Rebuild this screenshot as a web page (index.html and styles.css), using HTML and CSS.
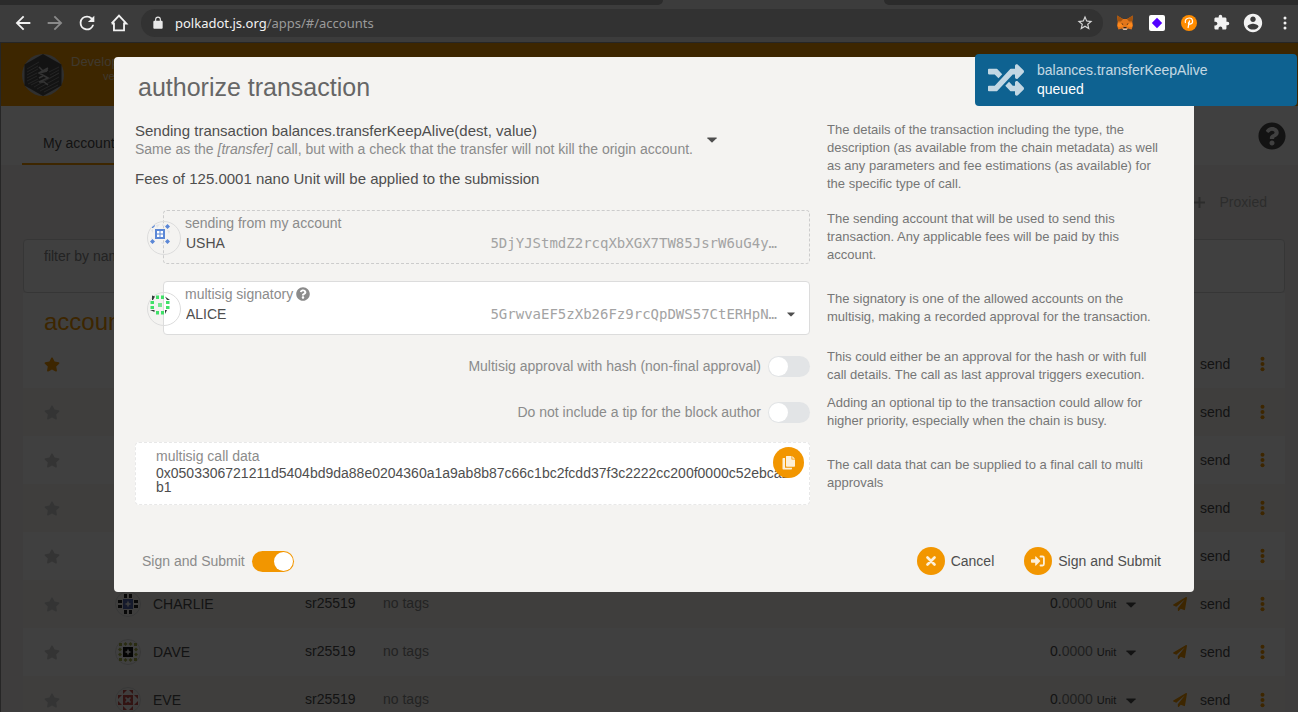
FILE: index.html
```
<!DOCTYPE html>
<html lang="en">
<head>
<meta charset="utf-8">
<title>Accounts</title>
<link rel="stylesheet" href="styles.css">
</head>
<body>
<svg class="sprite" aria-hidden="true">
  <symbol id="i-star" viewBox="0 0 576 512"><path d="M259.3 17.8L194 150.2 47.9 171.5c-26.2 3.8-36.7 36.1-17.7 54.6l105.7 103-25 145.5c-4.5 26.3 23.2 46 46.4 33.7L288 439.6l130.7 68.7c23.2 12.2 50.9-7.4 46.4-33.7l-25-145.5 105.7-103c19-18.5 8.5-50.8-17.7-54.6L382 150.2 316.7 17.8c-11.7-23.6-45.6-23.9-57.4 0z"/></symbol>
  <symbol id="i-help" viewBox="0 0 512 512"><path d="M504 256c0 136.997-111.043 248-248 248S8 392.997 8 256C8 119.083 119.043 8 256 8s248 111.083 248 248zM262.655 90c-54.497 0-89.255 22.957-116.549 63.758-3.536 5.286-2.353 12.415 2.715 16.258l34.699 26.31c5.205 3.947 12.621 3.008 16.665-2.122 17.864-22.658 30.113-35.797 57.303-35.797 20.429 0 45.698 13.148 45.698 32.958 0 14.976-12.363 22.667-32.534 33.976C247.128 238.528 216 254.941 216 296v4c0 6.627 5.373 12 12 12h56c6.627 0 12-5.373 12-12v-1.333c0-28.462 83.186-29.647 83.186-106.667 0-58.002-60.165-102-116.531-102zM256 338c-25.365 0-46 20.635-46 46 0 25.364 20.635 46 46 46s46-20.636 46-46c0-25.365-20.635-46-46-46z"/></symbol>
  <symbol id="i-plane" viewBox="0 0 512 512"><path d="M476 3.2L12.5 270.6c-18.1 10.4-15.8 35.6 2.2 43.2L121 358.4l287.3-253.2c5.5-4.9 13.3 2.6 8.6 8.3L176 407v80.5c0 23.6 28.5 32.9 42.5 15.8L282 426l124.6 52.2c14.2 6 30.4-2.9 33-18.2l72-432C515 7.8 493.3-6.8 476 3.2z"/></symbol>
  <symbol id="i-dots" viewBox="0 0 4 16"><circle cx="2" cy="2.7" r="2"/><circle cx="2" cy="8" r="2"/><circle cx="2" cy="13.3" r="2"/></symbol>
  <symbol id="i-caret" viewBox="0 0 10 6"><path d="M.6.5h8.8q.6.2.2.7L5.500 5.300q-.5.4-1 0L.4 1.200Q0 .7.6.5z"/></symbol>
</svg>

<header class="browser">
  <div class="tabstrip"><span class="tabs-before"></span><span class="tab-active"></span><span class="tabs-after"></span></div>
  <div class="toolbar">
    <nav class="nav-buttons">
      <button class="tool" aria-label="Back"><svg width="22" height="22" viewBox="0 0 24 24"><path d="M20 11H7.830l5.590-5.590L12 4l-8 8 8 8 1.410-1.410L7.830 13H20z"/></svg></button>
      <button class="tool tool-off" aria-label="Forward"><svg width="22" height="22" viewBox="0 0 24 24"><path d="M4 11h12.170l-5.590-5.590L12 4l8 8-8 8-1.410-1.410L16.170 13H4z"/></svg></button>
      <button class="tool" aria-label="Reload"><svg width="22" height="22" viewBox="0 0 24 24"><path d="M17.650 6.350A7.958 7.958 0 0 0 12 4a8 8 0 1 0 7.730 10h-2.080A6 6 0 1 1 12 6c1.660 0 3.140.69 4.220 1.780L13 11h7V4l-2.350 2.350z"/></svg></button>
      <button class="tool" aria-label="Home"><svg width="22" height="22" viewBox="0 0 24 24"><path fill="none" stroke="currentColor" stroke-width="2" d="M6.500 11.500V20h11v-8.500M4 12.500L12 4l8 8.500h-2.500M4 12.500h2.500"/></svg></button>
    </nav>
    <div class="omnibox">
      <svg class="lock" width="14" height="14" viewBox="0 0 24 24"><path d="M18 8h-1V6A5 5 0 0 0 7 6v2H6c-1.100 0-2 .9-2 2v10c0 1.100.9 2 2 2h12c1.100 0 2-.9 2-2V10c0-1.100-.9-2-2-2zM15.100 8H8.900V6a3.100 3.100 0 0 1 6.200 0z"/></svg>
      <div class="url"><span class="url-host">polkadot.js.org</span>/apps/#/accounts</div>
      <button class="tool tool-star" aria-label="Bookmark"><svg width="18" height="18" viewBox="0 0 24 24"><path d="M22 9.240l-7.190-.62L12 2 9.190 8.630 2 9.240l5.460 4.730L5.820 21 12 17.270 18.180 21l-1.630-7.030L22 9.240zM12 15.400l-3.760 2.270 1-4.280-3.320-2.880 4.380-.38L12 6.100l1.710 4.040 4.380.38-3.320 2.880 1 4.280L12 15.400z"/></svg></button>
    </div>
    <div class="extensions">
      <button class="tool" aria-label="Wallet"><svg width="16" height="16" viewBox="0 0 16 16"><path fill="#e2761b" d="M0 .5L6 4h4l6-3.500-.8 6 .8 4-1.400 4-3.600-1L9.500 15h-3L5 13.500l-3.600 1L0 10.500l.8-4z"/><path fill="#a3540f" d="M0 .5L6 4l-2 2.500L.8 6.500zM16 .5L10 4l2 2.500 3.200 0z"/><path fill="#ff8a1c" d="M1 8l4 .5 1 3-5 .5zM15 8l-4 .5-1 3 5 .5z"/><path fill="#27211c" d="M4 8.500l2 .3.200 1.200zM12 8.500l-2 .3-.2 1.200zM6.500 12h3v1.500h-3z"/><path fill="#d7c1b3" d="M5.500 13.500h5l-1 1.500h-3z"/></svg></button>
      <button class="tool" aria-label="Diamond extension"><svg width="16" height="16" viewBox="0 0 16 16"><rect width="16" height="16" rx="2" fill="#fff"/><path fill="#5200ff" d="M8 2.800L13.200 8 8 13.200 2.800 8z"/></svg></button>
      <button class="tool" aria-label="Account extension"><svg width="16" height="16" viewBox="0 0 16 16"><circle cx="8" cy="8" r="8" fill="#ff8c00"/><path fill="none" stroke="#fff" stroke-width="1.200" d="M4.500 8C3.500 5 5.500 3 8.300 3c3.800 0 4.700 5.500.7 6.200-1.500.2-2-1-1.200-1.800M8.600 5.500L7 13"/></svg></button>
      <button class="tool" aria-label="Extensions"><svg width="17" height="17" viewBox="0 0 24 24"><path d="M20.500 11H19V7c0-1.100-.9-2-2-2h-4V3.500a2.500 2.500 0 0 0-5 0V5H4c-1.100 0-1.990.9-1.990 2v3.800H3.500c1.490 0 2.700 1.210 2.700 2.700s-1.210 2.700-2.700 2.700H2V20c0 1.100.9 2 2 2h3.800v-1.500c0-1.490 1.210-2.700 2.700-2.700s2.700 1.210 2.700 2.700V22H17c1.100 0 2-.9 2-2v-4h1.500a2.500 2.500 0 0 0 0-5z"/></svg></button>
      <button class="tool" aria-label="Profile"><svg width="22" height="22" viewBox="0 0 24 24"><path d="M12 2C6.480 2 2 6.480 2 12s4.480 10 10 10 10-4.480 10-10S17.520 2 12 2zm0 3c1.660 0 3 1.340 3 3s-1.340 3-3 3-3-1.340-3-3 1.340-3 3-3zm0 14.200c-2.500 0-4.710-1.280-6-3.220.03-1.990 4-3.080 6-3.080 1.990 0 5.970 1.090 6 3.080-1.290 1.940-3.500 3.220-6 3.220z"/></svg></button>
      <button class="tool" aria-label="Menu"><svg width="4" height="14" viewBox="0 0 4 14"><circle cx="2" cy="2" r="1.500"/><circle cx="2" cy="7" r="1.500"/><circle cx="2" cy="12" r="1.500"/></svg></button>
    </div>
  </div>
</header>

<div class="viewport">
  <div class="app">
    <header class="app-bar">
      <svg class="logo" width="42" height="42" viewBox="0 0 42 42"><circle cx="21" cy="21" r="21" fill="#bbb"/><path d="M21 0l18.500 10.500v21L21 42 2.500 31.500v-21z"/><path stroke="#999" stroke-width=".8" fill="none" d="M5 15l12-7M5 18l11-6M5 21l11-6M5 24l10-5M5 27l10-5M6 30l10-5M9 31l8-4M12 33l25-14M15 35l22-12M18 37l19-10M22 38l14-7M27 18l10-5M28 21l9-5M28 24l9-5"/><path stroke="#ccc" stroke-width="1.500" fill="none" d="M17 13l4 4 5-1M26 14l-9 5 9 5-9 4M17 19l8-2M17 24l4-2M17 28l5 0 4 3"/></svg>
      <div class="chain"><div>Development</div><div class="chain-version">version</div></div>
    </header>
    <nav class="tabs">
      <a class="tab-link" href="#">My accounts</a>
      <a class="help-link" href="#" aria-label="Help"><svg width="28" height="28"><use href="#i-help"/></svg></a>
    </nav>
    <main class="content">
      <div class="actions"><button class="proxied" disabled><svg width="13" height="13" viewBox="0 0 13 13"><path d="M5.500 1h2v4.500H12v2H7.500V12h-2V7.500H1v-2h4.500z"/></svg>Proxied</button></div>
      <div class="filter"><label for="filter">filter by name or tags</label><input id="filter" type="text"></div>
      <table class="accounts">
        <colgroup><col class="c-star"><col class="c-name"><col class="c-type"><col class="c-tags"><col class="c-balance"><col class="c-send"><col class="c-menu"></colgroup>
        <thead><tr><th colspan="7">accounts</th></tr></thead>
        <tbody>
          <tr><td class="star fav"><svg width="16" height="15"><use href="#i-star"/></svg></td><td></td><td></td><td></td><td></td><td><button class="send"><svg width="14" height="14"><use href="#i-plane"/></svg>send</button></td><td class="menu"><svg width="5" height="16"><use href="#i-dots"/></svg></td></tr>
          <tr><td class="star"><svg width="16" height="15"><use href="#i-star"/></svg></td><td></td><td></td><td></td><td></td><td><button class="send"><svg width="14" height="14"><use href="#i-plane"/></svg>send</button></td><td class="menu"><svg width="5" height="16"><use href="#i-dots"/></svg></td></tr>
          <tr><td class="star"><svg width="16" height="15"><use href="#i-star"/></svg></td><td></td><td></td><td></td><td></td><td><button class="send"><svg width="14" height="14"><use href="#i-plane"/></svg>send</button></td><td class="menu"><svg width="5" height="16"><use href="#i-dots"/></svg></td></tr>
          <tr><td class="star"><svg width="16" height="15"><use href="#i-star"/></svg></td><td></td><td></td><td></td><td></td><td><button class="send"><svg width="14" height="14"><use href="#i-plane"/></svg>send</button></td><td class="menu"><svg width="5" height="16"><use href="#i-dots"/></svg></td></tr>
          <tr><td class="star"><svg width="16" height="15"><use href="#i-star"/></svg></td><td></td><td></td><td></td><td></td><td><button class="send"><svg width="14" height="14"><use href="#i-plane"/></svg>send</button></td><td class="menu"><svg width="5" height="16"><use href="#i-dots"/></svg></td></tr>
          <tr><td class="star"><svg width="16" height="15"><use href="#i-star"/></svg></td>
            <td><div class="who"><svg width="26" height="26" viewBox="0 0 26 26"><circle cx="13" cy="13" r="12.500" fill="none" stroke="#ddd"/><path fill="#222" d="M9 3h3v4H9zM14 3h3v4h-3zM9 19h3v4H9zM14 19h3v4h-3zM3 9h4v3H3zM3 14h4v3H3zM19 9h4v3h-4zM19 14h4v3h-4z"/><path fill="#5567b0" d="M8 8h10v10H8z"/><path fill="#eee" d="M13 9.500l1 2.500 2.500 1-2.500 1-1 2.500-1-2.500-2.500-1 2.500-1z"/></svg>CHARLIE</div></td>
            <td class="type">sr25519</td><td class="tags">no tags</td><td class="balance">0.<span>0000</span> <small>Unit</small><svg width="10" height="6"><use href="#i-caret"/></svg></td>
            <td><button class="send"><svg width="14" height="14"><use href="#i-plane"/></svg>send</button></td><td class="menu"><svg width="5" height="16"><use href="#i-dots"/></svg></td></tr>
          <tr><td class="star"><svg width="16" height="15"><use href="#i-star"/></svg></td>
            <td><div class="who"><svg width="26" height="26" viewBox="0 0 26 26"><circle cx="13" cy="13" r="12.500" fill="none" stroke="#ddd"/><path fill="#a9b04a" d="M10.500 3l2 2-2 2-2-2zM15.500 3l2 2-2 2-2-2zM10.500 19l2 2-2 2-2-2zM15.500 19l2 2-2 2-2-2zM5 8.500l2 2-2 2-2-2zM5 13.500l2 2-2 2-2-2zM21 8.500l2 2-2 2-2-2zM21 13.500l2 2-2 2-2-2zM4 4h3v3H4zM19 4h3v3h-3zM4 19h3v3H4zM19 19h3v3h-3z"/><path fill="#111" d="M8 8h10v10H8z"/><path fill="#eee" d="M13 9.500l1 2.500 2.500 1-2.500 1-1 2.500-1-2.500-2.500-1 2.500-1z"/></svg>DAVE</div></td>
            <td class="type">sr25519</td><td class="tags">no tags</td><td class="balance">0.<span>0000</span> <small>Unit</small><svg width="10" height="6"><use href="#i-caret"/></svg></td>
            <td><button class="send"><svg width="14" height="14"><use href="#i-plane"/></svg>send</button></td><td class="menu"><svg width="5" height="16"><use href="#i-dots"/></svg></td></tr>
          <tr><td class="star"><svg width="16" height="15"><use href="#i-star"/></svg></td>
            <td><div class="who"><svg width="26" height="26" viewBox="0 0 26 26"><circle cx="13" cy="13" r="12.500" fill="none" stroke="#ddd"/><path fill="#c8504a" d="M3 8h4l-4 4zM23 8h-4l4 4zM3 18h4l-4-4zM23 18h-4l4-4zM8 3h4L8 7zM18 3h-4l4 4zM8 23h4l-4-4zM18 23h-4l4-4zM8 8h10v10H8z"/><path fill="#eee" d="M11 10l2 1.500 2-1.500 1 1-1.500 2 1.500 2-1 1-2-1.500-2 1.500-1-1 1.500-2-1.500-2z"/></svg>EVE</div></td>
            <td class="type">sr25519</td><td class="tags">no tags</td><td class="balance">0.<span>0000</span> <small>Unit</small><svg width="10" height="6"><use href="#i-caret"/></svg></td>
            <td><button class="send"><svg width="14" height="14"><use href="#i-plane"/></svg>send</button></td><td class="menu"><svg width="5" height="16"><use href="#i-dots"/></svg></td></tr>
        </tbody>
      </table>
    </main>
  </div>

  <div class="dimmer">
    <section class="modal" role="dialog" aria-labelledby="modal-title">
      <h1 class="modal-title" id="modal-title">authorize transaction</h1>
      <div class="rows">
        <div class="row row-call">
          <div class="call">
            <details>
              <summary>
                <span><span class="call-name">Sending transaction balances.transferKeepAlive(dest, value)</span><span class="call-doc">Same as the <em>[transfer]</em> call, but with a check that the transfer will not kill the origin account.</span></span>
                <svg width="10" height="6"><use href="#i-caret"/></svg>
              </summary>
            </details>
            <p class="fees">Fees of 125.0001 nano Unit will be applied to the submission</p>
          </div>
          <p class="hint">The details of the transaction including the type, the description (as available from the chain metadata) as well as any parameters and fee estimations (as available) for the specific type of call.</p>
        </div>

        <div class="row">
          <div class="account account-fixed">
            <svg class="identicon" width="34" height="34" viewBox="0 0 34 34"><circle cx="17" cy="17" r="16.500" fill="none" stroke="#dcdcdc"/><path fill="#e2e4e8" d="M9 4l4-1-3 4zM15 3l4 2h-4zM4 9l2-1v4zM20 9l3 1-1 3zM4 16l2 3-2-1zM14 21l4 1-3 1z"/><path fill="#5b87d6" d="M8 8h10v10H8zM5 6l3-2v1L6 7H5zM20.500 3l2.500 2.500L20.500 8 18 5.500zM5.500 18L8 20.500 5.500 23 3 20.500zM20.500 18l2.500 2.500-2.500 2.500-2.500-2.500z"/><path fill="#fff" d="M10 10h2.500v2.500H10zM13.500 10H16v2.500h-2.500zM10 13.500h2.500V16H10zM13.500 13.500H16V16h-2.500z"/></svg>
            <div class="account-label"><label for="sender">sending from my account</label></div>
            <div class="account-line"><select id="sender" disabled><option>USHA</option></select><span class="address">5DjYJStmdZ2rcqXbXGX7TW85JsrW6uG4y…</span></div>
          </div>
          <p class="hint">The sending account that will be used to send this transaction. Any applicable fees will be paid by this account.</p>
        </div>

        <div class="row">
          <div class="account">
            <svg class="identicon" width="34" height="34" viewBox="0 0 34 34"><circle cx="17" cy="17" r="16.500" fill="none" stroke="#dcdcdc"/><path fill="#333c3a" d="M5 3.500l3 1L6 8H5zM18 4.500l5 3.500h-3zM3 18h4.500v2zM18 18h2l-2 4z"/><path fill="#40e068" d="M9 3.500h3V7H9zM14 3.500h3V7h-3zM9 19h3v3.500H9zM14 19h3v3.500h-3zM3.500 9H7v3H3.500zM3.500 14H7v3H3.500zM19 9h3.500v3H19zM19 14h3.500v3H19z"/><path fill="#76e890" d="M11 11h4v4h-4z"/></svg>
            <div class="account-label"><label for="signatory">multisig signatory</label><svg width="14" height="14"><use href="#i-help"/></svg></div>
            <div class="account-line"><select id="signatory"><option>ALICE</option></select><span class="address">5GrwvaEF5zXb26Fz9rcQpDWS57CtERHpN…</span><svg class="account-caret" width="8" height="5"><use href="#i-caret"/></svg></div>
          </div>
          <p class="hint">The signatory is one of the allowed accounts on the multisig, making a recorded approval for the transaction.</p>
        </div>

        <div class="row row-toggle">
          <label class="toggle">Multisig approval with hash (non-final approval)<input type="checkbox"></label>
          <p class="hint">This could either be an approval for the hash or with full call details. The call as last approval triggers execution.</p>
        </div>
        <div class="row row-toggle">
          <label class="toggle">Do not include a tip for the block author<input type="checkbox"></label>
          <p class="hint">Adding an optional tip to the transaction could allow for higher priority, especially when the chain is busy.</p>
        </div>

        <div class="row row-data">
          <div class="data">
            <label for="calldata">multisig call data</label>
            <output id="calldata">0x0503306721211d5404bd9da88e0204360a1a9ab8b87c66c1bc2fcdd37f3c2222cc200f0000c52ebca2b1</output>
            <button class="round copy" aria-label="Copy"><svg width="14" height="16" viewBox="0 0 14 16"><path d="M4.500 1h5v3.500H13V11q0 .8-.8.8H4.800Q4 11.800 4 11V1.500Q4 1 4.500 1zM10.300 1L13 3.700h-2.700zM3 3v9.800h7v.9q0 .8-.8.8H1.300q-.8 0-.8-.8V3.800Q.5 3 1.300 3z"/></svg></button>
          </div>
          <p class="hint">The call data that can be supplied to a final call to multi approvals</p>
        </div>
      </div>
      <footer class="modal-footer">
        <label class="toggle">Sign and Submit<input type="checkbox" checked></label>
        <div class="buttons">
          <button class="labelled"><span class="round"><svg width="10" height="10" viewBox="0 0 10 10"><path stroke="currentColor" stroke-width="2.600" stroke-linecap="round" d="M1.500 1.500l7 7M8.500 1.500l-7 7"/></svg></span>Cancel</button>
          <button class="labelled"><span class="round"><svg width="14" height="12" viewBox="0 0 14 12"><path d="M.8 4.200h3.400V1.800Q4.200.8 5 1.500L9 5.500q.5.500 0 1L5 10.500q-.8.700-.8-.3V7.800H.8Q0 7.800 0 7V5q0-.8.8-.8z"/><path fill="none" stroke="currentColor" stroke-width="1.800" stroke-linecap="round" d="M9.500 1.500h2q1.400 0 1.400 1.400v6.200q0 1.400-1.400 1.400h-2"/></svg></span>Sign and Submit</button>
        </div>
      </footer>
    </section>
  </div>

  <aside class="toast" role="status">
    <svg width="36" height="36" viewBox="0 0 512 512"><path d="M504.971 359.029c9.373 9.373 9.373 24.569 0 33.941l-80 79.984c-15.010 15.010-40.971 4.490-40.971-16.971V416h-58.785a12.004 12.004 0 0 1-8.773-3.812l-70.556-75.596 53.333-57.143L352 336h32v-39.981c0-21.438 25.943-31.998 40.971-16.971l80 79.981zM12 176h84l52.781 56.551 53.333-57.143-70.556-75.596A11.999 11.999 0 0 0 122.785 96H12c-6.627 0-12 5.373-12 12v56c0 6.627 5.373 12 12 12zm372 0v39.984c0 21.460 25.961 31.980 40.971 16.971l80-79.984c9.373-9.373 9.373-24.569 0-33.941l-80-79.981C409.943 24.021 384 34.582 384 56.019V96h-58.785a12.004 12.004 0 0 0-8.773 3.812L96 336H12c-6.627 0-12 5.373-12 12v56c0 6.627 5.373 12 12 12h110.785c3.326 0 6.503-1.381 8.773-3.812L352 176h32z"/></svg>
    <div><div class="toast-call">balances.transferKeepAlive</div><div>queued</div></div>
  </aside>
</div>
</body>
</html>
```
FILE: styles.css
```
* { box-sizing: border-box; }
body {
  margin: 0;
  height: 100vh;
  overflow: hidden;
  display: flex;
  flex-direction: column;
  font: 14px/20px "Liberation Sans", Arial, sans-serif;
  color: #4e4e4e;
}
svg { display: block; fill: currentColor; }
p, h1 { margin: 0; font-weight: 400; }
button { border: 0; padding: 0; background: none; font: inherit; color: inherit; }
a { color: inherit; text-decoration: none; }
.sprite { position: absolute; width: 0; height: 0; }

/* browser chrome */
.tabstrip { height: 5px; display: flex; background: #3c3c3c; }
.tabs-before { flex: 663; background: #2b2b2b; border-bottom-right-radius: 5px; }
.tab-active { flex: 221; }
.tabs-after { flex: 414; background: #2b2b2b; border-bottom-left-radius: 5px; }
.toolbar {
  height: 38px;
  display: flex;
  align-items: center;
  padding: 0 1px 2px 11px;
  background: #3c3c3c;
  border-bottom: 1px solid #262626;
}
.nav-buttons, .extensions { display: flex; gap: 8px; }
.tool { width: 24px; height: 28px; display: grid; place-items: center; color: #f2f2f2; }
.tool-off { color: #8a8a8a; }
.tool-star { width: 36px; color: #d5d5d5; }
.omnibox {
  flex: 1;
  height: 28px;
  display: flex;
  align-items: center;
  margin: 0 10px;
  padding-left: 10px;
  border-radius: 14px;
  background: #323232;
  color: #9a9a9a;
}
.lock { color: #e8e8e8; }
.url { flex: 1; padding-left: 10px; font: 13px/20px "Noto Sans", "Open Sans", sans-serif; }
.url-host { color: #f2f2f2; }

/* accounts page */
.viewport { position: relative; flex: 1; overflow: hidden; border-left: 1px solid #262626; }
.app { background: #f5f3f1; }
.app-bar { height: 63px; display: flex; align-items: center; gap: 7px; padding: 0 21px; background: #f29600; }
.chain { color: #fff; opacity: .7; padding-bottom: 12px; font-size: 13px; line-height: 14px; }
.chain-version { padding-left: 32px; font-size: 11px; }
.tabs {
  height: 59px;
  display: flex;
  justify-content: space-between;
  align-items: flex-end;
  padding: 0 12px 0 21px;
  background: #fff;
}
.tab-link { padding: 0 21px 10px; border-bottom: 2px solid #f29600; }
.help-link { align-self: center; }
.content { padding: 0 13px 0 22px; }
.actions { height: 74px; display: flex; align-items: center; justify-content: flex-end; padding-right: 18px; }
.proxied { display: flex; align-items: center; gap: 14px; opacity: .4; }
.filter { height: 54px; padding: 6px 20px; background: #fff; border: 1px solid #d8d8d8; border-radius: 4px; color: #8b8b8b; }
.filter label { display: block; }
.filter input { width: 100%; height: 16px; border: 0; outline: 0; background: none; }
.accounts { width: 100%; table-layout: fixed; border-collapse: collapse; background: #fff; }
.accounts th { height: 47px; padding: 11px 21px 0; text-align: left; font-size: 24px; font-weight: 400; color: #f29600; }
.accounts td { height: 48px; padding: 0; }
.accounts tbody tr:nth-child(even) { background: #faf8f4; }
.c-star { width: 58px; }
.c-name { width: 224px; }
.c-type { width: 78px; }
.c-balance { width: 95px; }
.c-send { width: 95px; }
.c-menu { width: 45px; }
.star { color: #d0d0d0; }
.star.fav { color: #f29600; }
.star svg { margin: 0 auto; }
.who { display: flex; align-items: center; gap: 12px; padding-left: 34px; }
.accounts .type, .accounts .tags, .accounts .balance { padding-bottom: 2px; }
.tags { color: #8b8b8b; }
.balance { white-space: nowrap; }
.balance span { opacity: .7; }
.balance small { font-size: 11px; }
.balance svg { display: inline-block; margin-left: 10px; }
.send { display: flex; align-items: center; gap: 13px; padding-left: 28px; }
.send svg, .menu { color: #f29600; }
.menu svg { margin: 0 auto; }

/* dialog */
.dimmer { position: absolute; inset: 0; padding: 14px 0 0 9px; background: rgba(0, 0, 0, .75); }
.modal { width: 100%; max-width: 1080px; margin: 0 auto; background: #f4f3f1; border-radius: 4px; }
.modal-title { padding: 15px 24px 0; font-size: 25px; line-height: 30px; color: #666; }
.rows { padding: 19px 21px 0; }
.row { display: grid; grid-template-columns: minmax(0, 675fr) minmax(0, 363fr); align-items: center; margin-top: 17px; }
.row-call { margin-top: 0; align-items: start; }
.hint { padding: 0 12px 0 17px; font-size: 13px; line-height: 18px; color: #767676; }
.call summary { display: flex; align-items: center; gap: 14px; list-style: none; }
.call-name, .call-doc, .fees { display: block; line-height: 19px; }
.call-name, .fees { font-size: 15px; }
.call-doc { color: #8b8b8b; }
.fees { padding-top: 10px; }
.account {
  position: relative;
  height: 54px;
  margin-left: 28px;
  padding: 2px 32px 0 21px;
  background: #fff;
  border: 1px solid #dcdcdc;
  border-radius: 4px;
}
.account-fixed { background: none; border: 1px dashed #ccc; }
.identicon { position: absolute; left: -17px; top: 10px; }
.account-label { display: flex; align-items: center; gap: 3px; color: #8b8b8b; }
.account-line { display: flex; align-items: center; padding-left: 1px; }
.account select { flex: 1; appearance: none; border: 0; padding: 0; background: none; font: inherit; color: #4e4e4e; opacity: 1; }
.address { font: 14px/20px "DejaVu Sans Mono", monospace; color: #a3a3a3; }
.account-caret { position: absolute; right: 14px; }
.row-toggle { margin-top: 13px; }
.row-toggle + .row-toggle { margin-top: 10px; }
.toggle { display: flex; align-items: center; justify-content: flex-end; gap: 7px; color: #8b8b8b; }
.toggle input { appearance: none; margin: 0; width: 42px; height: 21px; padding: 1px; border-radius: 11px; background: #e2e4e6; }
.toggle input::before { content: ""; display: block; width: 19px; height: 19px; border-radius: 50%; background: #fff; }
.toggle input:checked { background: #f29600; }
.toggle input:checked::before { margin-left: auto; }
.row-data { margin-top: 12px; }
.data { position: relative; height: 63px; padding: 4px 18px 0 20px; background: #fff; border: 1px dashed #e8e8e8; border-radius: 4px; }
.data label { display: block; line-height: 19px; color: #8b8b8b; }
.data output { display: block; line-height: 14px; word-break: break-all; }
.round { width: 28px; height: 28px; display: grid; place-items: center; border-radius: 50%; background: #f29600; color: #fdf0d8; }
.copy { position: absolute; right: 5px; top: 4px; width: 31px; height: 31px; }
.modal-footer { display: flex; justify-content: space-between; align-items: center; padding: 42px 33px 17px 28px; }
.buttons { display: flex; gap: 30px; }
.labelled { display: flex; align-items: center; gap: 6px; }

/* notification */
.toast {
  position: absolute;
  right: 1px;
  top: 11px;
  width: 322px;
  display: flex;
  align-items: center;
  gap: 13px;
  padding: 7px 13px;
  border-radius: 4px;
  background: #0e6291;
  color: #fff;
  line-height: 19px;
}
.toast svg, .toast-call { opacity: .75; }
```
